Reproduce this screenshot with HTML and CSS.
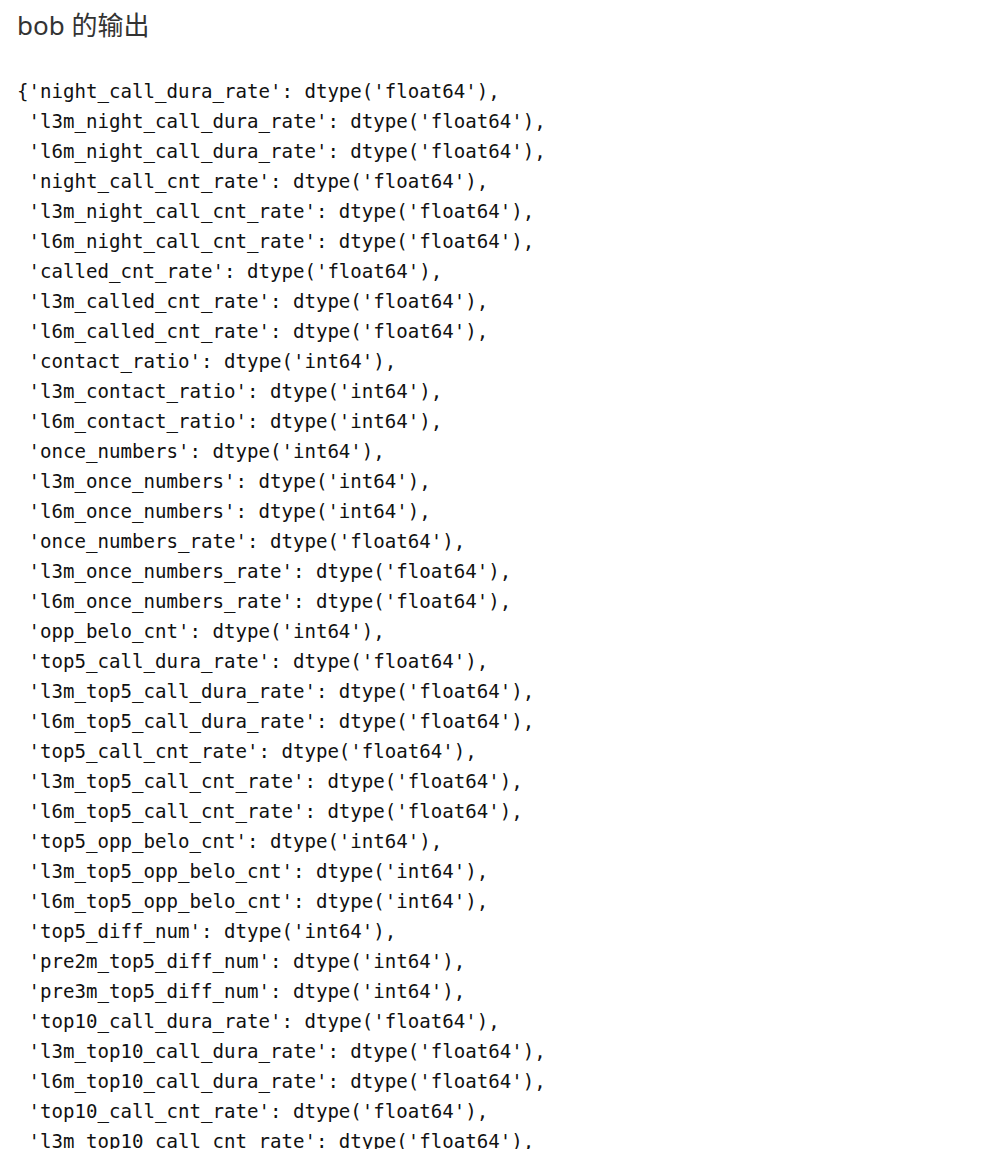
FILE: index.html
```html
<!DOCTYPE html>
<html lang="zh">
<head>
<meta charset="utf-8">
<title>bob 的输出</title>
<link rel="stylesheet" href="styles.css">
</head>
<body>
<main class="page">
<h2 class="title">bob 的输出</h2>
<pre class="output">{'night_call_dura_rate': dtype('float64'),
 'l3m_night_call_dura_rate': dtype('float64'),
 'l6m_night_call_dura_rate': dtype('float64'),
 'night_call_cnt_rate': dtype('float64'),
 'l3m_night_call_cnt_rate': dtype('float64'),
 'l6m_night_call_cnt_rate': dtype('float64'),
 'called_cnt_rate': dtype('float64'),
 'l3m_called_cnt_rate': dtype('float64'),
 'l6m_called_cnt_rate': dtype('float64'),
 'contact_ratio': dtype('int64'),
 'l3m_contact_ratio': dtype('int64'),
 'l6m_contact_ratio': dtype('int64'),
 'once_numbers': dtype('int64'),
 'l3m_once_numbers': dtype('int64'),
 'l6m_once_numbers': dtype('int64'),
 'once_numbers_rate': dtype('float64'),
 'l3m_once_numbers_rate': dtype('float64'),
 'l6m_once_numbers_rate': dtype('float64'),
 'opp_belo_cnt': dtype('int64'),
 'top5_call_dura_rate': dtype('float64'),
 'l3m_top5_call_dura_rate': dtype('float64'),
 'l6m_top5_call_dura_rate': dtype('float64'),
 'top5_call_cnt_rate': dtype('float64'),
 'l3m_top5_call_cnt_rate': dtype('float64'),
 'l6m_top5_call_cnt_rate': dtype('float64'),
 'top5_opp_belo_cnt': dtype('int64'),
 'l3m_top5_opp_belo_cnt': dtype('int64'),
 'l6m_top5_opp_belo_cnt': dtype('int64'),
 'top5_diff_num': dtype('int64'),
 'pre2m_top5_diff_num': dtype('int64'),
 'pre3m_top5_diff_num': dtype('int64'),
 'top10_call_dura_rate': dtype('float64'),
 'l3m_top10_call_dura_rate': dtype('float64'),
 'l6m_top10_call_dura_rate': dtype('float64'),
 'top10_call_cnt_rate': dtype('float64'),
 'l3m_top10_call_cnt_rate': dtype('float64'),</pre>
</main>
</body>
</html>
```

FILE: styles.css
```css
html, body {
  margin: 0;
  padding: 0;
  background: #ffffff;
}

.page {
  padding: 8px 17px 0;
}

.title {
  margin: 0;
  font-family: "Noto Sans", "Noto Sans CJK SC", sans-serif;
  font-size: 26px;
  line-height: 34px;
  font-weight: 400;
  color: #333333;
}

.output {
  margin: 35px 0 0;
  font-family: "DejaVu Sans Mono", "Liberation Mono", monospace;
  font-size: 19.1px;
  line-height: 30px;
  color: #111111;
  white-space: pre;
}
```
